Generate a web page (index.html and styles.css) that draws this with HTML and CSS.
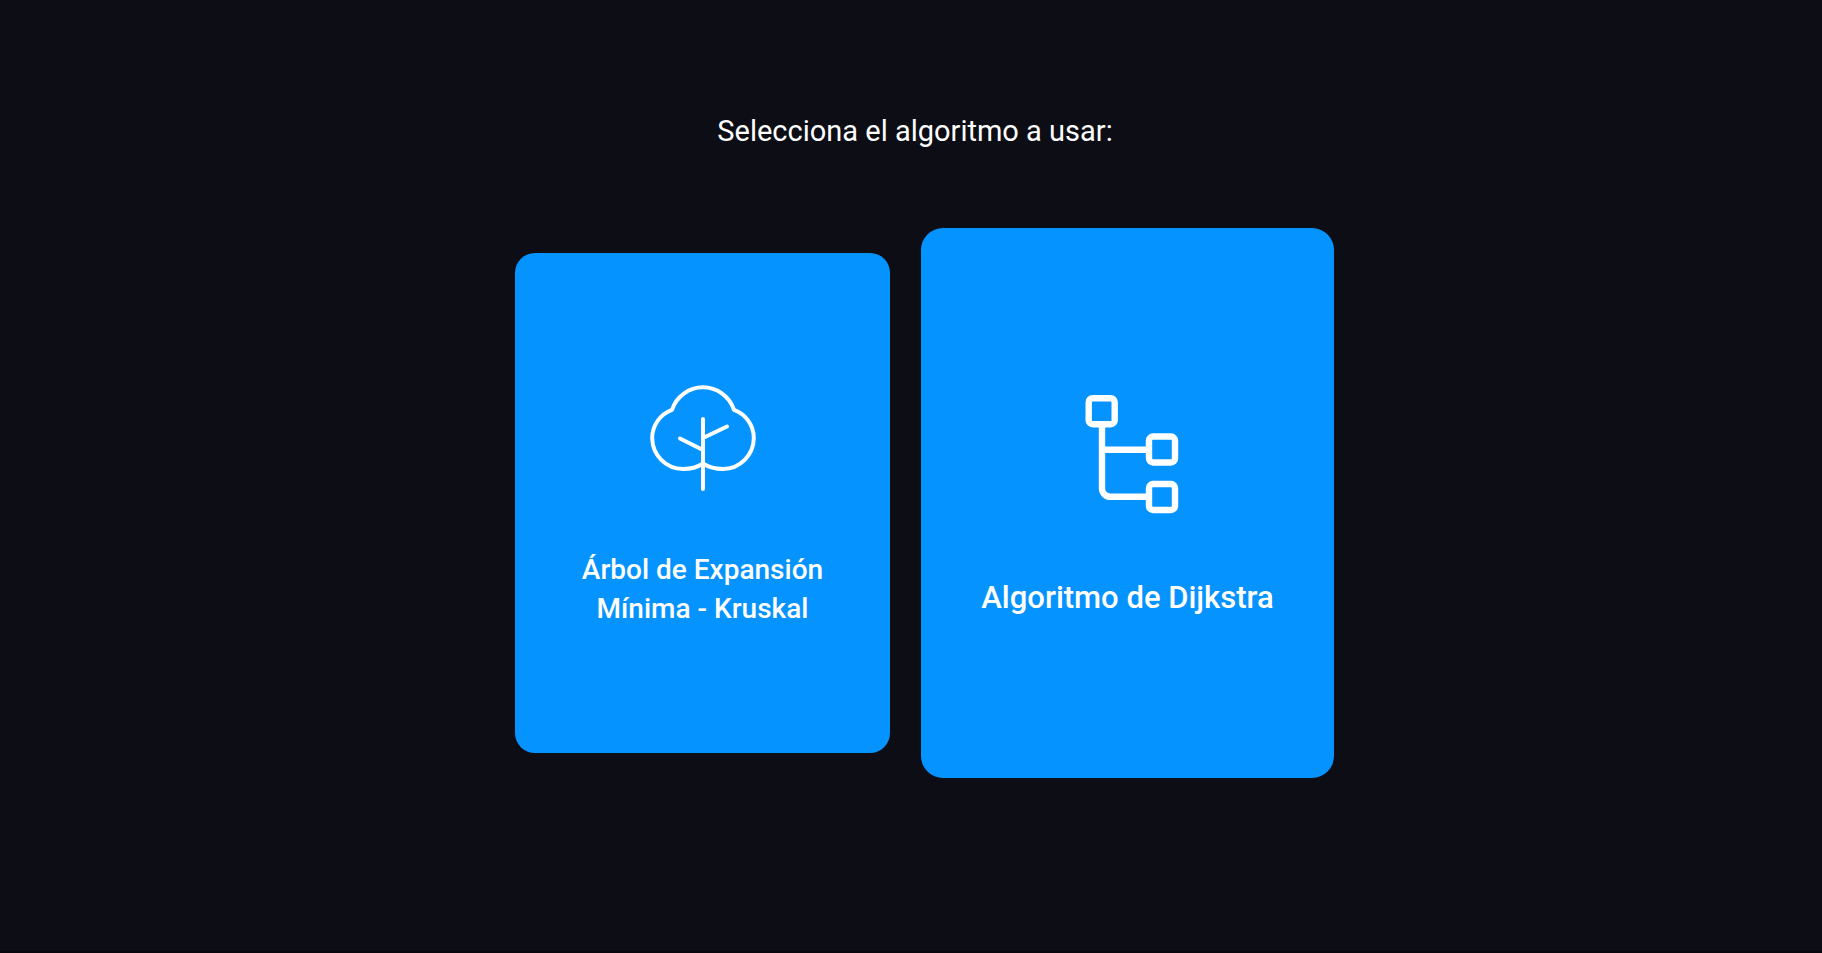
FILE: index.html
```html
<!DOCTYPE html>
<html lang="es">
<head>
<meta charset="utf-8">
<meta name="viewport" content="width=device-width, initial-scale=1">
<title>Selecciona el algoritmo</title>
<link rel="stylesheet" href="styles.css">
</head>
<body>
<main class="page">
  <h1 class="title">Selecciona el algoritmo a usar:</h1>
  <div class="cards">
    <button class="card" type="button">
      <svg class="card-icon" viewBox="0 0 120 120" fill="none" stroke="currentColor" stroke-width="4" stroke-linecap="round" stroke-linejoin="round" aria-hidden="true">
        <path d="M60 85.500C54 89.500 48 91 40 91A31.200 31.200 0 0 1 9.200 60C9.200 47 17.500 36 29 31.800A32.600 32.600 0 0 1 91 31.800C102.500 36 110.800 47 110.800 60A31.200 31.200 0 0 1 80 91C72 91 66 89.500 60 85.500"/>
        <path d="M60 41V111M60 72L37 60.500M60 60L84 48.500"/>
      </svg>
      <span class="card-label">Árbol de Expansión Mínima - Kruskal</span>
    </button>
    <button class="card card-active" type="button">
      <svg class="card-icon" viewBox="0 0 132 132" fill="none" stroke="currentColor" stroke-width="6.4" aria-hidden="true">
        <rect x="26.7" y="11.2" width="26" height="26" rx="4"/>
        <rect x="87" y="49.5" width="26" height="26" rx="4"/>
        <rect x="87" y="97" width="26" height="26" rx="4"/>
        <path d="M40 37V101.500A8.300 8.300 0 0 0 48.300 109.800H87M40 62.700H87"/>
      </svg>
      <span class="card-label">Algoritmo de Dijkstra</span>
    </button>
  </div>
</main>
</body>
</html>
```
FILE: styles.css
```css
* {
  box-sizing: border-box;
}

body {
  margin: 0;
  background: #0c0d15;
  color: #fff;
  font-family: Roboto, "Liberation Sans", sans-serif;
}

.page {
  display: flex;
  flex-direction: column;
  align-items: center;
  gap: 102px;
  min-height: 100vh;
  padding: 112px 0 48px 8px;
  border-bottom: 2px solid #07060c;
}

.title {
  margin: 0;
  font-size: 29px;
  font-weight: 400;
  line-height: 39px;
  text-align: center;
}

.cards {
  display: flex;
  flex-wrap: wrap;
  justify-content: center;
  align-items: center;
  gap: 50px;
}

.card {
  display: flex;
  flex-direction: column;
  align-items: center;
  justify-content: center;
  gap: 52px;
  width: 375px;
  min-height: 500px;
  padding: 40px 60px;
  border: 0;
  border-radius: 20px;
  background: #0593ff;
  color: inherit;
  font: inherit;
  font-size: 28px;
  font-weight: 500;
  line-height: 39px;
  cursor: pointer;
}

.card-icon {
  width: 120px;
  height: 120px;
}

/* The highlighted card grows over its slot without moving its neighbours. */
.card-active {
  gap: 57px;
  width: 413px;
  min-height: 550px;
  margin: -25px -19px;
  padding: 44px 50px;
  border-radius: 22px;
  font-size: 31px;
  line-height: 43px;
}

.card-active .card-icon {
  width: 132px;
  height: 132px;
}
```
